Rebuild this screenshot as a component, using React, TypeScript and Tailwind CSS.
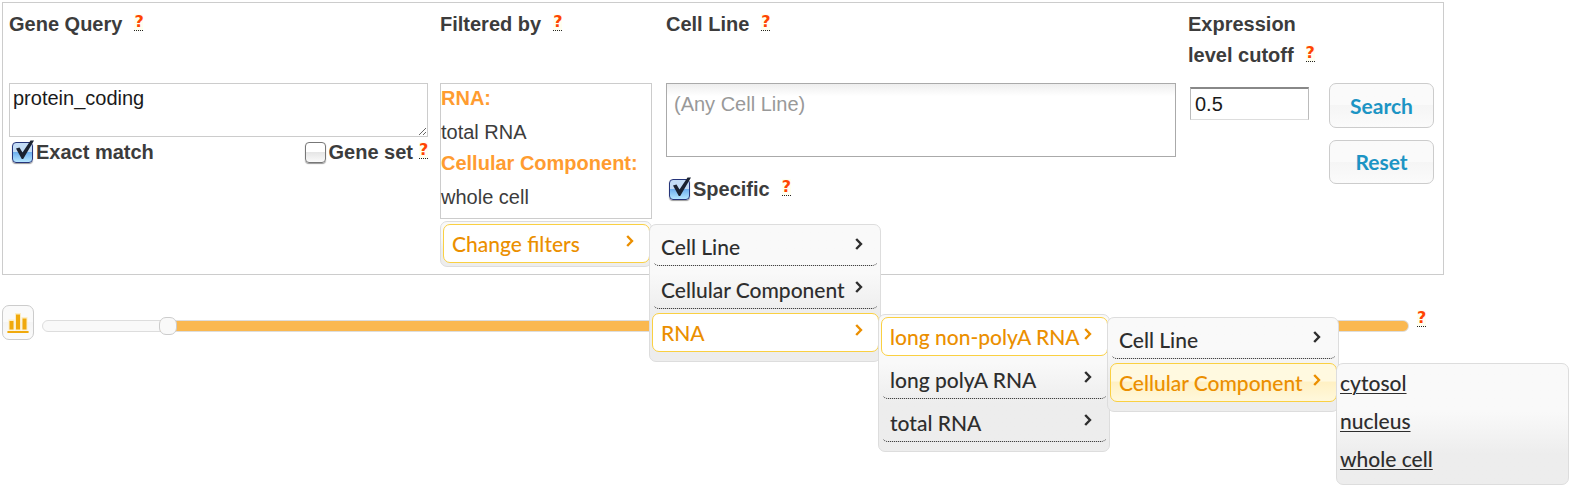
import { useState, type ReactNode } from 'react';

const menuFont = "font-['Lato','Trebuchet_MS',sans-serif] text-[21px]";

function Help({ className = 'ml-3' }: { className?: string }) {
  return (
    <a
      href="#help"
      aria-label="Help"
      className={`${className} inline-block w-[9px] shrink-0 border-b border-dotted border-[#222] bg-[#fffff0] text-center font-['DejaVu_Sans',sans-serif] text-[16px] leading-4 font-bold text-[#ff4500]`}
    >
      ?
    </a>
  );
}

function Heading({ htmlFor, children }: { htmlFor?: string; children: ReactNode }) {
  return (
    <div className="min-h-[74px] leading-[31px] font-bold">
      <label htmlFor={htmlFor}>{children}</label>
      <span className="relative -top-1">
        <Help />
      </span>
    </div>
  );
}

function Check({ label, initial }: { label: string; initial: boolean }) {
  const [on, setOn] = useState(initial);
  return (
    <label className="flex items-center gap-[3px] font-bold">
      <span className="relative flex">
        <input
          type="checkbox"
          checked={on}
          onChange={(e) => setOn(e.target.checked)}
          className="size-[21px] appearance-none rounded-[4px] border border-[#777] bg-linear-to-b from-white from-45% via-[#e6e6e6] via-50% to-[#fafafa] shadow-[0_1px_1px_#999] checked:border-[#26357a] checked:from-[#c3dcf5] checked:via-[#6fb0ee] checked:to-[#b5e6ff]"
        />
        {on && (
          <svg viewBox="0 0 24 24" className="pointer-events-none absolute -top-[3px] left-0 size-6" aria-hidden="true">
            <path d="M4 9.500 L7.500 8.500 L10.500 13.500 L18.500 1.500 L22 1.500 L11.200 20 L9.800 20 Z" fill="#1b2230" />
          </svg>
        )}
      </span>
      {label}
    </label>
  );
}

function Menu({ className, children }: { className: string; children: ReactNode }) {
  return (
    <ul
      className={`${className} flex flex-col gap-1 rounded-[7px] border border-[#ddd] bg-linear-to-b from-[#f9f9f9] from-35% to-[#ededed] to-65% pt-0.5 pr-px pl-0.5`}
    >
      {children}
    </ul>
  );
}

const itemStyles = {
  plain: 'border-dotted border-transparent border-b-[#222] text-[#2e2e2e]',
  open: 'border-[#fad042] bg-white text-[#eb8f00]',
  hover: 'border-[#fad042] bg-linear-to-b from-[#fff9e0] from-45% via-[#fff1c4] via-50% to-[#fff8dc] text-[#eb8f00]',
};

function Item({ label, look = 'plain', children }: { label: string; look?: keyof typeof itemStyles; children?: ReactNode }) {
  return (
    <li className="relative">
      <button
        type="button"
        aria-haspopup="menu"
        className={`${itemStyles[look]} flex h-[39px] w-full items-center justify-between rounded-[7px] border pr-[15px] pl-2 whitespace-nowrap`}
      >
        {label}
        <svg viewBox="0 0 8 12" className="mb-1.5 h-3 w-2 shrink-0" aria-hidden="true">
          <path d="M1.2 1 L6 6 L1.2 11" fill="none" stroke="currentColor" strokeWidth="2.4" />
        </svg>
      </button>
      {children}
    </li>
  );
}

const sub = 'absolute left-full z-10 -ml-px w-[232px] pb-[9px]';

function FilterMenu() {
  return (
    <nav className={`${menuFont} mt-0.5 leading-[30px] font-medium`}>
      <Menu className="w-[212px] pb-[3px]">
        <Item label="Change filters" look="open">
          <Menu className={`${sub} top-0`}>
            <Item label="Cell Line" />
            <Item label="Cellular Component" />
            <Item label="RNA" look="open">
              <Menu className={`${sub} top-px`}>
                <Item label="long non-polyA RNA" look="open">
                  <Menu className={`${sub} top-0`}>
                    <Item label="Cell Line" />
                    <Item label="Cellular Component" look="hover">
                      <ul className="absolute top-0 left-full z-10 -ml-px w-[233px] rounded-[7px] border border-[#ddd] bg-linear-to-b from-[#f9f9f9] from-40% to-[#ededed] to-75% pb-1.5 pl-[3px] leading-[38px] text-[#2e2e2e]">
                        {['cytosol', 'nucleus', 'whole cell'].map((name) => (
                          <li key={name}>
                            <a href="#filter" className="underline decoration-1 underline-offset-2">
                              {name}
                            </a>
                          </li>
                        ))}
                      </ul>
                    </Item>
                  </Menu>
                </Item>
                <Item label="long polyA RNA" />
                <Item label="total RNA" />
              </Menu>
            </Item>
          </Menu>
        </Item>
      </Menu>
    </nav>
  );
}

const buttonStyle =
  'rounded-[7px] border border-[#ccc] bg-linear-to-b from-[#fafafa] from-50% via-[#f5f5f5] via-50% to-[#fbfbfb]';

function CutoffSlider() {
  const max = 1000;
  const [value, setValue] = useState(86);
  const pct = (value / max) * 100;
  return (
    <div className="mt-[30px] flex items-center gap-2 pr-[18px]">
      <button type="button" aria-label="Show histogram" className={`${buttonStyle} flex h-[35px] w-8 items-center justify-center`}>
        <svg viewBox="0 0 24 24" className="size-6" aria-hidden="true">
          <g fill="none" stroke="#fdeec6" strokeWidth="2">
            <path d="M3.500 9.500h4v9h-4zM10 3h4v15.500h-4zM16.500 7h4v11.500h-4zM1 21h22" />
          </g>
          <path d="M3.500 10h4v8.500h-4zM10 3.500h4v15h-4zM16.500 7.500h4v11h-4zM1.500 20h21v2h-21z" fill="#f0a90c" />
        </svg>
      </button>
      <input
        type="range"
        aria-label="Expression level"
        min={0}
        max={max}
        value={value}
        onChange={(e) => setValue(Number(e.target.value))}
        style={{ backgroundImage: `linear-gradient(to right, #f9f9f9 ${pct}%, #fab850 ${pct}%)` }}
        className="mt-1.5 h-3 min-w-0 flex-1 appearance-none rounded-full border border-[#ddd] [&::-webkit-slider-thumb]:size-[18px] [&::-webkit-slider-thumb]:appearance-none [&::-webkit-slider-thumb]:rounded-[7px] [&::-webkit-slider-thumb]:border [&::-webkit-slider-thumb]:border-[#ccc] [&::-webkit-slider-thumb]:bg-[#f9f9f9]"
      />
      <Help className="mb-2" />
    </div>
  );
}

export default function App() {
  return (
    <main className="min-h-screen bg-white pt-0.5 pr-[133px] pl-0.5 font-['Liberation_Sans',Arial,sans-serif] text-[20px] text-[#3c3c3c]">
      <form
        onSubmit={(e) => e.preventDefault()}
        className="grid grid-cols-[minmax(0,419fr)_214px_minmax(0,510fr)_129px_105px] gap-x-3 border border-[#ccc] pt-1.5 pr-[9px] pb-[7px] pl-1.5"
      >
        <section>
          <Heading htmlFor="gene">Gene Query</Heading>
          <textarea
            id="gene"
            defaultValue="protein_coding"
            className="block h-[54px] w-full resize border border-[#ccc] px-[3px] py-px leading-[26px] text-[#1a1a1a]"
          />
          <div className="flex h-[30px] items-center justify-between pl-[3px]">
            <Check label="Exact match" initial />
            <span className="flex items-center">
              <Check label="Gene set" initial={false} />
              <Help className="mb-1 ml-1.5" />
            </span>
          </div>
        </section>

        <section>
          <Heading>Filtered by</Heading>
          <dl className="w-[212px] border border-[#ccc] pb-1 whitespace-nowrap">
            <dt className="leading-7 font-bold text-[#ff9c30]">RNA:</dt>
            <dd className="pt-1 leading-[33px]">total RNA</dd>
            <dt className="leading-7 font-bold text-[#ff9c30]">Cellular Component:</dt>
            <dd className="pt-1 leading-[33px]">whole cell</dd>
          </dl>
          <FilterMenu />
        </section>

        <section>
          <Heading htmlFor="cell-line">Cell Line</Heading>
          <textarea
            id="cell-line"
            placeholder="(Any Cell Line)"
            className="block h-[74px] w-full resize-none border border-[#aaa] bg-linear-to-b from-[#eee] to-white to-[12px] px-[7px] py-1.5 leading-7 placeholder:text-[#999]"
          />
          <div className="mt-[17px] flex h-[30px] items-center pl-[3px]">
            <Check label="Specific" initial />
            <Help className="mb-1 ml-3" />
          </div>
        </section>

        <section className="whitespace-nowrap">
          <Heading htmlFor="cutoff">
            Expression
            <br />
            level cutoff
          </Heading>
          <input
            id="cutoff"
            type="text"
            defaultValue="0.5"
            className="mt-1 ml-0.5 block h-[33px] w-[119px] border border-t-2 border-[#bbb] border-t-[#888] border-b-[#ddd] px-1 text-[#1a1a1a]"
          />
        </section>

        <section className={`${menuFont} flex flex-col gap-3 pt-[74px] font-bold text-[#1c94c4]`}>
          <button type="submit" className={`${buttonStyle} h-[45px]`}>
            Search
          </button>
          <button type="reset" className={`${buttonStyle} h-11`}>
            Reset
          </button>
        </section>
      </form>
      <CutoffSlider />
    </main>
  );
}
